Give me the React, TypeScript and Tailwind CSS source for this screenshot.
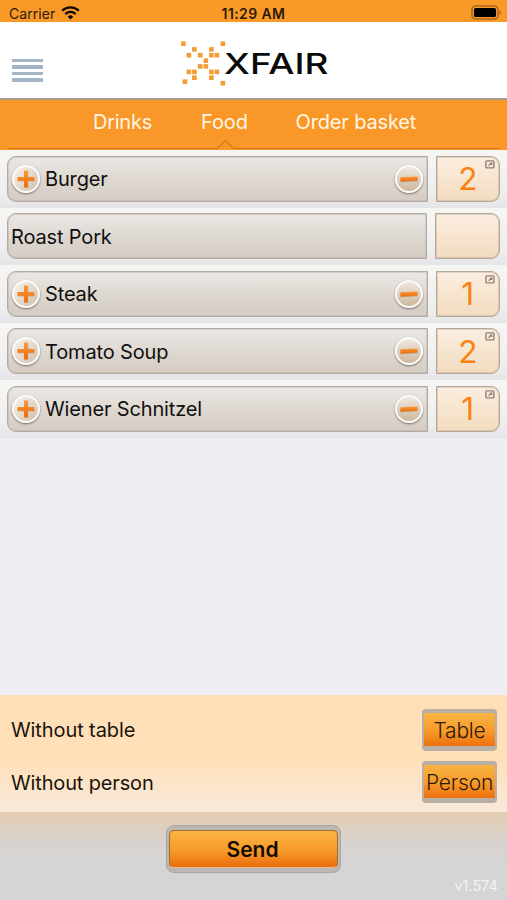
import clsx from "clsx";

interface MenuItem {
  name: string;
  count: number;
}

const items: MenuItem[] = [
  { name: "Burger", count: 2 },
  { name: "Roast Pork", count: 0 },
  { name: "Steak", count: 1 },
  { name: "Tomato Soup", count: 2 },
  { name: "Wiener Schnitzel", count: 1 },
];

// top-left corners of the logo squares
const logoDots = [
  [0, 0], [39.5, 0], [11, 5.7], [28, 5.7],
  [5.5, 11.5], [16.8, 11.5], [28, 11.5], [33.5, 11.5],
  [22.5, 17], [16.8, 22.7], [22.5, 22.7],
  [5.5, 28.2], [11, 28.2], [28, 28.2], [33.5, 28.2],
  [11, 34], [28, 34], [1.5, 38], [39.5, 39.5],
];

function StatusBar() {
  return (
    <div className="grid h-[22px] grid-cols-3 items-center bg-[#f99928] px-[9px] pt-[5px] text-[14px] leading-none text-[#2c1b06]">
      <div className="flex items-center gap-[6px]">
        <span className="tracking-[0.05px]">Carrier</span>
        <svg className="-mt-[2px]" width="19" height="14" viewBox="0 0 19 14" fill="none" stroke="#120b02">
          <path d="M1.2 4.8a11.8 11.8 0 0 1 16.6 0" strokeWidth="2.3" />
          <path d="M4.3 8.1a7.4 7.4 0 0 1 10.4 0" strokeWidth="2.2" />
          <path d="M9.5 13.6 6.7 10.7a4 4 0 0 1 5.6 0Z" fill="#120b02" stroke="none" />
        </svg>
      </div>
      <span className="text-center font-semibold tracking-[0.4px] whitespace-nowrap">11:29 AM</span>
      <svg className="justify-self-end -mr-[4px] -mt-[2px]" width="31" height="15" viewBox="0 0 31 15">
        <rect x="1" y="1" width="26" height="13" rx="3.5" fill="none" stroke="#a9691f" strokeWidth="1.6" />
        <rect x="3" y="3" width="22" height="9" rx="1.6" fill="#000" />
        <path d="M28.6 5.3c2.1.8 2.1 3.6 0 4.4Z" fill="#a9691f" />
      </svg>
    </div>
  );
}

function Header() {
  return (
    <header className="grid h-[78px] grid-cols-[181px_1fr] border-b-2 border-[#a79b8e] bg-white">
      <div className="flex flex-col gap-[3px] pt-[37px] pl-3">
        {[0, 1, 2, 3].map((i) => (
          <span key={i} className="h-[3.4px] w-[31px] bg-[#a3b5c6]" />
        ))}
      </div>
      <svg className="mt-[19px]" width="150" height="46" viewBox="0 0 150 46">
        {logoDots.map(([x, y]) => (
          <rect key={`${x}-${y}`} x={x + 0.1} y={y + 0.4} width="4.6" height="4.6" fill="#f59c32" />
        ))}
        <text
          x="43"
          y="33"
          fontFamily="Inter"
          fontWeight="550"
          fontSize="29"
          textLength="104.5"
          lengthAdjust="spacingAndGlyphs"
          fill="#0a0a0a"
        >
          XFAIR
        </text>
      </svg>
    </header>
  );
}

function Tabs() {
  return (
    <nav className="h-[50px] bg-[#f99728] text-[20px] text-[#fff6e4]">
      <div className="flex h-[43px] items-center pl-[93px] leading-none">
        <span className="w-[108px] tracking-[-0.25px]">Drinks</span>
        <span className="w-[94.5px] tracking-[-0.1px]">Food</span>
        <span className="tracking-[-0.15px] whitespace-nowrap">Order basket</span>
      </div>
      <svg className="-mt-[4px]" width="507" height="11" viewBox="0 0 507 11" fill="none">
        <path d="M8 9.5H217.5L225.5 1.5 233.5 9.5H499" stroke="#cf7815" strokeWidth="1.1" />
      </svg>
    </nav>
  );
}

function RoundButton({ minus }: { minus?: boolean }) {
  return (
    <span
      className={clsx(
        "flex size-[28px] shrink-0 items-center justify-center rounded-full border-2 border-[#fbfaf8] shadow-[0_1px_2px_rgba(60,50,45,0.65)]",
        minus
          ? "bg-linear-to-b from-[#eee8e0] to-[#cdb89d]"
          : "bg-linear-to-br from-[#f6f3ef] to-[#d2c1ad]"
      )}
    >
      <svg width="20" height="20" viewBox="0 0 20 20">
        <defs>
          <linearGradient id="sign" x1="0" y1="0" x2="0" y2="1">
            <stop offset="0" stopColor="#fb9a3c" />
            <stop offset="1" stopColor="#f06c08" />
          </linearGradient>
        </defs>
        {minus ? (
          <>
            <path d="M1.5 9 18.5 7.9V12.3L1.5 13.3Z" fill="#a77f5a" opacity=".6" />
            <path d="M1.5 8.3 18.5 7.4V11.5L1.5 12.4Z" fill="url(#sign)" />
          </>
        ) : (
          <>
            <path d="M8.3 2.3h4v6.2h6.2v4h-6.2v6.4h-4v-6.4H1.9v-4h6.4Z" fill="#a77f5a" opacity=".45" />
            <path d="M8 1.5h3.9v6.6h6.4v3.7h-6.4v6.4H8v-6.4H1.5V8.1H8Z" fill="url(#sign)" />
          </>
        )}
      </svg>
    </span>
  );
}

function ItemRow({ item }: { item: MenuItem }) {
  const ordered = item.count > 0;

  return (
    <div className="flex h-[57.5px] justify-between bg-linear-to-b from-[#f5f5f4] from-10% via-[#eeeeee] via-75% to-[#e5e5e8] px-[7px] pt-[5.5px]">
      <div
        className={clsx(
          "flex h-[46px] items-center rounded-l-[9px] border border-[#b3aaa1] bg-linear-to-b from-[#ebe8e4] via-[#ddd7d0] via-55% to-[#d5ccc4] text-[20px] text-[#11100f] shadow-[inset_0_0_0_1px_rgba(179,170,161,0.4)]",
          ordered ? "w-[421px] pr-[4px] pl-[4px]" : "w-[420px] pl-[3px]"
        )}
      >
        {ordered && <RoundButton />}
        <span className={clsx("flex-1 pt-px tracking-[-0.15px]", ordered && "pl-[5px]")}>{item.name}</span>
        {ordered && <RoundButton minus />}
      </div>
      <div
        className={clsx(
          "relative flex h-[46px] items-center justify-center rounded-r-[9px] border border-[#b5a697] bg-linear-to-b from-[#fbeee0] via-[#f7e5cf] via-50% to-[#f2dcc0] pt-px text-[31.5px] text-[#f9820f] shadow-[inset_0_0_0_1px_rgba(181,166,151,0.4)]",
          ordered ? "w-[64.5px]" : "w-[65px]"
        )}
      >
        {ordered && (
          <>
            {item.count}
            <svg className="absolute top-[3px] right-[4px]" width="10" height="9" viewBox="0 0 10 9" fill="none" stroke="#93807a" strokeWidth="1.4">
              <rect x="0.9" y="0.9" width="8" height="7" rx="0.8" />
              <path d="M3.5 5.8 6.5 3.2M4.6 3H6.8V5" strokeWidth="1.2" />
            </svg>
          </>
        )}
      </div>
    </div>
  );
}

function SmallButton({ label }: { label: string }) {
  return (
    <button className="flex h-[42px] w-[75px] items-center justify-center rounded-[4px] border-x-2 border-t-4 border-b-[5px] border-[#b8afa7] bg-linear-to-b from-[#f9b443] via-[#f69a29] via-55% to-[#ed700b] pt-[2px] text-[21px] leading-none font-[350] tracking-[-0.2px] text-[#2c1908]">
      {label}
    </button>
  );
}

export default function App() {
  return (
    <div className="flex h-[900px] w-[507px] flex-col overflow-hidden bg-[#efeef4] font-['Inter',sans-serif]">
      <StatusBar />
      <Header />
      <Tabs />
      <main className="flex-1">
        {items.map((item) => (
          <ItemRow key={item.name} item={item} />
        ))}
      </main>
      <section className="flex h-[117px] flex-col gap-[10px] bg-linear-to-b from-[#ffdfb8] via-[#ffe0b8] via-55% to-[#f9e9da] pt-[14px] pr-[10px] pl-[11px] text-[20px] text-[#1b130b]">
        <div className="flex h-[42px] items-center justify-between">
          <span className="tracking-[-0.1px]">Without table</span>
          <SmallButton label="Table" />
        </div>
        <div className="flex h-[42px] items-center justify-between">
          <span className="pt-px tracking-[-0.15px]">Without person</span>
          <SmallButton label="Person" />
        </div>
      </section>
      <footer className="flex h-[88px] flex-col items-center bg-linear-to-b from-[#e4cdb2] via-[#d8d3cf] via-35% to-[#d5d5d5] to-60% pt-[13px]">
        <button className="flex h-[48px] w-[175px] rounded-[8px] border border-[#aaa6a4] bg-[#bdb7b3] p-[2px] pt-[4px]">
          <span className="flex h-[38px] w-full items-center justify-center rounded-[5px] border border-[#a66b2d] border-b-[#e8ba8c] bg-linear-to-b from-[#fab544] via-[#f69a28] via-55% to-[#ea6d0b] pt-px pr-[2px] text-[21px] font-semibold text-[#120a02]">
            Send
          </span>
        </button>
        <span className="mt-[2px] mr-[9px] self-end text-[14.5px] text-[#f2f2f2]">v1.574</span>
      </footer>
    </div>
  );
}
